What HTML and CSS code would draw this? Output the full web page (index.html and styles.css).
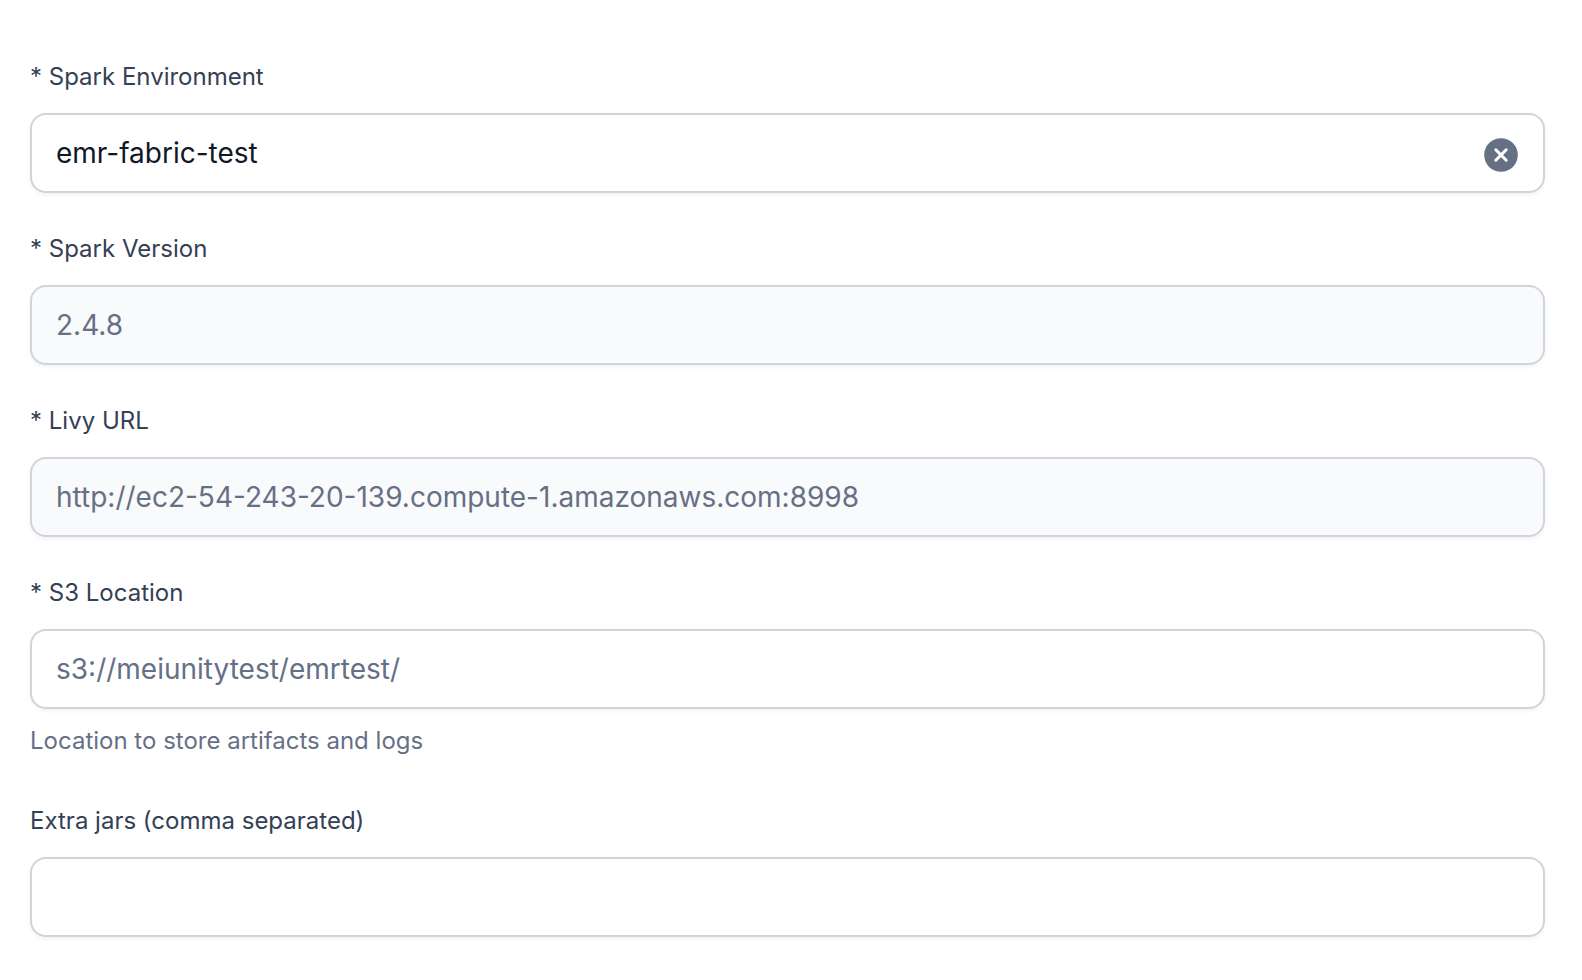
FILE: index.html
```html
<!DOCTYPE html>
<html lang="en">
<head>
<meta charset="utf-8">
<title>Spark Environment</title>
<link rel="stylesheet" href="styles.css">
</head>
<body>
<form class="form">
  <div class="field">
    <label class="label" for="env">* Spark Environment</label>
    <div class="control">
      <input class="input" id="env" type="text" value="emr-fabric-test">
      <button class="clear" type="button" aria-label="Clear">
        <svg class="clear-icon" viewBox="0 0 34 34" aria-hidden="true"><circle cx="17" cy="17" r="16.8" fill="#667085"/><path d="M11.8 11.8l10.4 10.4M22.2 11.8l-10.4 10.4" stroke="#fff" stroke-width="3" stroke-linecap="round"/></svg>
      </button>
    </div>
  </div>
  <div class="field">
    <label class="label" for="version">* Spark Version</label>
    <div class="control control-disabled">
      <input class="input" id="version" type="text" value="2.4.8" disabled>
    </div>
  </div>
  <div class="field">
    <label class="label" for="livy">* Livy URL</label>
    <div class="control control-disabled">
      <input class="input" id="livy" type="text" value="http://ec2-54-243-20-139.compute-1.amazonaws.com:8998" disabled>
    </div>
  </div>
  <div class="field">
    <label class="label" for="s3">* S3 Location</label>
    <div class="control">
      <input class="input" id="s3" type="text" placeholder="s3://meiunitytest/emrtest/" aria-describedby="s3-hint">
    </div>
    <p class="hint" id="s3-hint">Location to store artifacts and logs</p>
  </div>
  <div class="field">
    <label class="label" for="jars">Extra jars (comma separated)</label>
    <div class="control">
      <input class="input" id="jars" type="text">
    </div>
  </div>
</form>
</body>
</html>
```
FILE: styles.css
```css
* {
  box-sizing: border-box;
}

body {
  margin: 0;
  background: #fff;
  font-family: Inter, "Liberation Sans", sans-serif;
}

.form {
  display: flex;
  flex-direction: column;
  gap: 36px;
  padding: 57px 37px 40px 30px;
}

.field {
  display: flex;
  flex-direction: column;
}

.label {
  margin-bottom: 16px;
  color: #344054;
  font-size: 24px;
  line-height: 40px;
}

.control {
  display: flex;
  align-items: center;
  height: 80px;
  padding: 0 24px;
  border: 2px solid #d0d5dd;
  border-radius: 16px;
  background: #fff;
  box-shadow: 0 2px 4px rgba(16, 24, 40, 0.05);
}

.control-disabled {
  background: #f9fafb;
}

.input {
  flex: 1;
  min-width: 0;
  height: 72px;
  padding: 0;
  border: 0;
  outline: 0;
  background: transparent;
  color: #101828;
  font: inherit;
  font-size: 28px;
}

.input:disabled,
.input::placeholder {
  color: #667085;
  opacity: 1;
}

.clear {
  display: flex;
  padding: 4px 1px 0 0;
  border: 0;
  background: transparent;
}

.clear-icon {
  width: 34px;
  height: 34px;
}

.hint {
  margin: 12px 0 4px;
  color: #667085;
  font-size: 24px;
  line-height: 40px;
}
```
